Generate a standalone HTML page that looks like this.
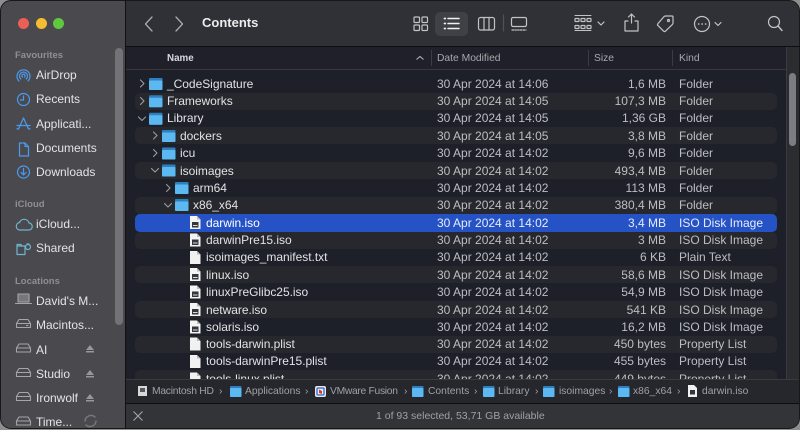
<!DOCTYPE html>
<html><head><meta charset="utf-8">
<style>
html,body{margin:0;padding:0;width:800px;height:430px;overflow:hidden;background:#8e8e8e}
*{box-sizing:border-box}
body{font-family:"Liberation Sans",sans-serif;position:relative}
.abs,.t,.r,svg{position:absolute}
.t{white-space:nowrap;line-height:16px;height:16px}
#win{position:absolute;left:0;top:0;width:800px;height:429px;border-radius:11px;overflow:hidden;background:#1e2028;border:1px solid #18181a}
.side{font-size:12px;color:#e4e4e6}
.sh{font-size:9.5px;color:#8f8f93;font-weight:bold}
.n{font-size:12px;color:#e2e2e4;letter-spacing:-.03px}
.d,.k{font-size:12px;color:#bdbdc1}
.s{font-size:12px;color:#bdbdc1;text-align:right;width:80px;left:586px}
.stripe{left:135px;width:642px;height:17.4px;background:#27282d;border-radius:5px}
.h{font-size:10.3px;color:#a8a8ac}
.p{font-size:10.3px;color:#a0a0a4}
</style></head><body>
<div id="win"></div>
<!-- sidebar -->
<div class="abs" style="left:1px;top:1px;width:124px;height:427px;background:#4a4a4e;border-radius:10px 0 0 10px"></div>
<div class="abs" style="left:115px;top:48px;width:8px;height:277px;background:#737377;border-radius:4px"></div>
<div class="abs" style="left:125px;top:0;width:1px;height:429px;background:#111"></div>
<!-- toolbar -->
<div class="abs" style="left:126px;top:1px;width:673px;height:45px;background:#303136;border-radius:0 10px 0 0"></div>
<div class="abs" style="left:126px;top:46px;width:674px;height:1px;background:#0e0e10"></div>
<!-- header -->
<div class="abs" style="left:126px;top:47px;width:673px;height:23px;background:#1f2029"></div>
<div class="abs" style="left:126px;top:69px;width:660px;height:1px;background:#37383c"></div>
<div class="abs" style="left:431px;top:50px;width:1px;height:16px;background:#3c3d42"></div>
<div class="abs" style="left:588px;top:50px;width:1px;height:16px;background:#3c3d42"></div>
<div class="abs" style="left:672px;top:50px;width:1px;height:16px;background:#3c3d42"></div>
<!-- list bg -->
<div class="abs" style="left:126px;top:70px;width:660px;height:309px;background:#1d2029"></div>
<div class="abs" style="left:786px;top:47px;width:13px;height:332px;background:#2b2c30;border-left:1px solid #3a3b3f"></div>
<div class="abs" style="left:789px;top:73px;width:7px;height:73px;background:#7c7d82;border-radius:4px"></div>

<!-- traffic -->
<div class="abs" style="left:18px;top:18px;width:11px;height:11px;border-radius:50%;background:#ec5f57"></div>
<div class="abs" style="left:36px;top:18px;width:11px;height:11px;border-radius:50%;background:#f5bd2f"></div>
<div class="abs" style="left:53px;top:18px;width:11px;height:11px;border-radius:50%;background:#5fc83f"></div>

<!-- sidebar text -->
<div class="t sh" style="left:15px;top:48px">Favourites</div>
<div class="t side" style="left:36px;top:67px">AirDrop</div>
<div class="t side" style="left:36px;top:91px">Recents</div>
<div class="t side" style="left:36px;top:116px">Applicati...</div>
<div class="t side" style="left:36px;top:140px">Documents</div>
<div class="t side" style="left:36px;top:164px">Downloads</div>
<div class="t sh" style="left:15px;top:197px">iCloud</div>
<div class="t side" style="left:36px;top:216px">iCloud...</div>
<div class="t side" style="left:36px;top:240px">Shared</div>
<div class="t sh" style="left:15px;top:274px">Locations</div>
<div class="t side" style="left:36px;top:293px">David's M...</div>
<div class="t side" style="left:36px;top:317px">Macintos...</div>
<div class="t side" style="left:36px;top:342px">AI</div>
<div class="t side" style="left:36px;top:366px">Studio</div>
<div class="t side" style="left:36px;top:390px">Ironwolf</div>
<div class="t side" style="left:36px;top:414px">Time...</div>

<!-- sidebar icons -->
<svg style="left:0;top:0" width="125" height="429" fill="none" stroke-linecap="round" stroke-linejoin="round">
 <g stroke="#4a9bf0" stroke-width="1.2">
  <path d="M19 81a6.500 6.500 0 1 1 9 0M20.800 79a4 4 0 1 1 5.400 0M22.500 77a1.600 1.600 0 1 1 2 0"/>
  <circle cx="23.500" cy="99.500" r="6"/><path d="M23.500 96v4h-3"/>
  <path d="M23.500 118l-5 11M23.500 118l5 11M17 125.500h13M17 129l2-1M30 129l-2-1"/>
  <path d="M19.500 143h5.500l3.500 3.500V156h-9z"/><path d="M25 143v3.500h3.500"/>
  <circle cx="23.500" cy="172" r="6"/><path d="M23.500 168.500v6M21 172.500l2.500 2.500 2.500-2.500"/>
 </g>
 <g stroke="#6fb3cf" stroke-width="1.200">
  <path d="M19.500 230h9a3.500 3.500 0 0 0 .5-7 5 5 0 0 0-9.500-.5 3.800 3.800 0 0 0 0 7.500z"/>
  <path d="M17 246h8v8.500H17zM17 246v-1.500h4l1 1.500M27 244h2"/><circle cx="28" cy="247" r="2.500"/>
 </g>
 <g stroke="#a6a6aa" stroke-width="1.100">
  <path d="M18 294h11v8H18z" fill="#77777a"/><path d="M15.500 303.500h16"/>
  <path d="M19 319.500h9l2.500 4v4h-14v-4zM16.500 323.500h14M26.500 325.500h1.500"/>
  <path d="M19 344h9l2.500 4v4h-14v-4zM16.500 348h14"/>
  <path d="M19 368.500h9l2.500 4v4h-14v-4zM16.500 372.500h14"/>
  <path d="M19 392.500h9l2.500 4v4h-14v-4zM16.500 396.500h14"/>
  <path d="M19 417h9l2.500 4v4h-14v-4zM16.500 421h14"/>
 </g>
 <g fill="#97979b">
  <path d="M90 345l-4 5h8zM86 351h8v1.500h-8z"/>
  <path d="M90 370l-4 5h8zM86 376h8v1.500h-8z"/>
  <path d="M90 394l-4 5h8zM86 400h8v1.500h-8z"/>
 </g>
 <path d="M85 421a6 6 0 0 1 10-4M96 421a6 6 0 0 1-10 4" stroke="#77777b" stroke-width="1.500"/>
</svg>

<!-- toolbar icons -->
<div class="abs" style="left:435px;top:12px;width:33px;height:24px;background:#404146;border-radius:5px"></div>
<svg style="left:126px;top:0" width="674" height="46" fill="none" stroke="#c3c3c6" stroke-width="1.200" stroke-linecap="round" stroke-linejoin="round">
 <path d="M26 17l-6.500 7 6.500 7M50 17l6.500 7-6.500 7" stroke-width="1.300" stroke="#a8a8ac"/>
 <rect x="288" y="17" width="5.500" height="5.500" rx="1"/><rect x="296" y="17" width="5.500" height="5.500" rx="1"/><rect x="288" y="25" width="5.500" height="5.500" rx="1"/><rect x="296" y="25" width="5.500" height="5.500" rx="1"/>
 <path d="M322 18.500h11M322 23.500h11M322 28.500h11" stroke="#f0f0f2" stroke-width="1.500"/>
 <path d="M318.500 18.500h.8M318.500 23.500h.8M318.500 28.500h.8" stroke="#f0f0f2" stroke-width="1.800"/>
 <rect x="352.500" y="17.500" width="16" height="12.500" rx="2"/><path d="M358 17.500v12.500M363 17.500v12.500"/>
 <path d="M377.500 15v16" stroke="#505156"/>
 <rect x="385.500" y="17.500" width="15" height="9" rx="1.500"/><path d="M386 30h14" stroke-dasharray="1.500 1.300"/>
 <path d="M449 15.500h16M449 30.500h16" stroke-width="1"/>
 <rect x="449" y="18.500" width="4" height="3" rx=".5"/><rect x="455" y="18.500" width="4" height="3" rx=".5"/><rect x="461" y="18.500" width="4" height="3" rx=".5"/>
 <rect x="449" y="25.500" width="4" height="3" rx=".5"/><rect x="455" y="25.500" width="4" height="3" rx=".5"/><rect x="461" y="25.500" width="4" height="3" rx=".5"/>
 <path d="M472 22l3 3 3-3M589 22.500l3 3 3-3"/>
 <path d="M505.500 23v-9M502.500 17l3-3 3 3M502 21h-3v10h13V21h-3"/>
 <path d="M546 16h-6.500a2 2 0 0 0-1.500.6L532 23.500a1.500 1.500 0 0 0 0 2.100l5.500 5.500a1.500 1.500 0 0 0 2.100 0l6.700-6.500a2 2 0 0 0 .7-1.500V17a1 1 0 0 0-1-1z"/>
 <circle cx="542.500" cy="20.500" r="1"/>
 <circle cx="576" cy="24" r="7.500"/><path d="M572.500 24h.3M576 24h.3M579.500 24h.3" stroke-width="1.500"/>
 <circle cx="648" cy="22" r="5.500"/><path d="M652 26l4 4.500" stroke-width="1.400"/>
</svg>
<div class="t" style="left:202px;top:15px;font-size:13px;font-weight:bold;color:#ececee">Contents</div>

<!-- header text -->
<div class="t h" style="left:167px;top:50.500px;font-weight:bold;color:#d8d8dc;font-size:9.800px">Name</div>
<svg style="left:415px;top:54px" width="10" height="8" fill="none" stroke="#b0b0b4" stroke-width="1.100"><path d="M1.500 5.500L5 2.500l3.500 3"/></svg>
<div class="t h" style="left:437px;top:50.500px">Date Modified</div>
<div class="t h" style="left:594px;top:50.500px">Size</div>
<div class="t h" style="left:679px;top:50.500px">Kind</div>

<!-- stripes -->
<div class="abs stripe" style="top:92.500px"></div>
<div class="abs stripe" style="top:127px"></div>
<div class="abs stripe" style="top:162px"></div>
<div class="abs stripe" style="top:196.500px"></div>
<div class="abs stripe" style="top:231.500px"></div>
<div class="abs stripe" style="top:266px"></div>
<div class="abs stripe" style="top:300.500px"></div>
<div class="abs stripe" style="top:335.500px"></div>
<div class="abs stripe" style="top:370px;height:9px;border-radius:5px 5px 0 0"></div>
<div class="abs" style="left:135px;top:214px;width:642px;height:17.500px;background:#2553c6;border-radius:5px"></div>

<svg style="left:126px;top:70px" width="660" height="309">
 <defs>
  <g id="f"><rect x="0" y="0" width="13.500" height="12" rx="1" fill="#2e7fbe"/><rect x="0" y="2.500" width="13.500" height="9.500" rx="1" fill="#5cb8f0"/></g>
  <g id="i"><path d="M0 0h7l3.500 3.500V13H0z" fill="#f4f4f4"/><path d="M7 0v3.500h3.500z" fill="#bbb"/><rect x="2" y="6" width="6.500" height="5.500" fill="#33363d"/><rect x="3" y="9" width="4.500" height="1" fill="#ddd"/></g>
  <g id="d"><path d="M0 0h7l3.500 3.500V13H0z" fill="#f1f1f1"/><path d="M7 0v3.500h3.500z" fill="#bbb"/></g>
 </defs>
 <g fill="none" stroke="#9c9ca0" stroke-width="1.100" stroke-linecap="round" stroke-linejoin="round">
  <path d="M14.500 10l3.500 3.500-3.500 3.500M14.500 27.500l3.500 3.500-3.500 3.500"/>
  <path d="M12.500 47l3.500 3.500 3.500-3.500"/>
  <path d="M27.500 62l3.500 3.500-3.500 3.500M27.500 79.500l3.500 3.500-3.500 3.500"/>
  <path d="M25.500 98.500l3.500 3.500 3.500-3.500"/>
  <path d="M40.500 114.500l3.500 3.500-3.500 3.500"/>
  <path d="M38.500 133.500l3.500 3.500 3.500-3.500"/>
 </g>
 <use href="#f" x="23" y="8"/><use href="#f" x="23" y="25.300"/><use href="#f" x="23" y="42.700"/>
 <use href="#f" x="36" y="60"/><use href="#f" x="36" y="77.500"/><use href="#f" x="36" y="94.500"/>
 <use href="#f" x="49" y="112"/><use href="#f" x="49" y="129"/>
 <use href="#i" x="64" y="146"/><use href="#i" x="64" y="163.500"/><use href="#d" x="64" y="181"/>
 <use href="#i" x="64" y="198"/><use href="#i" x="64" y="215.500"/><use href="#i" x="64" y="233"/><use href="#i" x="64" y="250.500"/>
 <use href="#d" x="64" y="267.500"/><use href="#d" x="64" y="285"/><use href="#d" x="64" y="302.500"/>
</svg>

<!-- rows -->
<div class="t n" style="left:167px;top:76px">_CodeSignature</div><div class="t d" style="left:437px;top:76px">30 Apr 2024 at 14:06</div><div class="t s" style="top:76px">1,6 MB</div><div class="t k" style="left:679px;top:76px">Folder</div>
<div class="t n" style="left:167px;top:93px">Frameworks</div><div class="t d" style="left:437px;top:93px">30 Apr 2024 at 14:05</div><div class="t s" style="top:93px">107,3 MB</div><div class="t k" style="left:679px;top:93px">Folder</div>
<div class="t n" style="left:167px;top:110px">Library</div><div class="t d" style="left:437px;top:110px">30 Apr 2024 at 14:05</div><div class="t s" style="top:110px">1,36 GB</div><div class="t k" style="left:679px;top:110px">Folder</div>
<div class="t n" style="left:180px;top:128px">dockers</div><div class="t d" style="left:437px;top:128px">30 Apr 2024 at 14:05</div><div class="t s" style="top:128px">3,8 MB</div><div class="t k" style="left:679px;top:128px">Folder</div>
<div class="t n" style="left:180px;top:145px">icu</div><div class="t d" style="left:437px;top:145px">30 Apr 2024 at 14:02</div><div class="t s" style="top:145px">9,6 MB</div><div class="t k" style="left:679px;top:145px">Folder</div>
<div class="t n" style="left:180px;top:162.500px">isoimages</div><div class="t d" style="left:437px;top:162.500px">30 Apr 2024 at 14:02</div><div class="t s" style="top:162.500px">493,4 MB</div><div class="t k" style="left:679px;top:162.500px">Folder</div>
<div class="t n" style="left:193px;top:180px">arm64</div><div class="t d" style="left:437px;top:180px">30 Apr 2024 at 14:02</div><div class="t s" style="top:180px">113 MB</div><div class="t k" style="left:679px;top:180px">Folder</div>
<div class="t n" style="left:193px;top:197px">x86_x64</div><div class="t d" style="left:437px;top:197px">30 Apr 2024 at 14:02</div><div class="t s" style="top:197px">380,4 MB</div><div class="t k" style="left:679px;top:197px">Folder</div>
<div class="t n" style="left:206px;top:215px;color:#fff">darwin.iso</div><div class="t d" style="left:437px;top:215px;color:#e8ecf8">30 Apr 2024 at 14:02</div><div class="t s" style="top:215px;color:#e8ecf8">3,4 MB</div><div class="t k" style="left:679px;top:215px;color:#e8ecf8">ISO Disk Image</div>
<div class="t n" style="left:206px;top:232px">darwinPre15.iso</div><div class="t d" style="left:437px;top:232px">30 Apr 2024 at 14:02</div><div class="t s" style="top:232px">3 MB</div><div class="t k" style="left:679px;top:232px">ISO Disk Image</div>
<div class="t n" style="left:206px;top:249px">isoimages_manifest.txt</div><div class="t d" style="left:437px;top:249px">30 Apr 2024 at 14:02</div><div class="t s" style="top:249px">6 KB</div><div class="t k" style="left:679px;top:249px">Plain Text</div>
<div class="t n" style="left:206px;top:267px">linux.iso</div><div class="t d" style="left:437px;top:267px">30 Apr 2024 at 14:02</div><div class="t s" style="top:267px">58,6 MB</div><div class="t k" style="left:679px;top:267px">ISO Disk Image</div>
<div class="t n" style="left:206px;top:284px">linuxPreGlibc25.iso</div><div class="t d" style="left:437px;top:284px">30 Apr 2024 at 14:02</div><div class="t s" style="top:284px">54,9 MB</div><div class="t k" style="left:679px;top:284px">ISO Disk Image</div>
<div class="t n" style="left:206px;top:301.500px">netware.iso</div><div class="t d" style="left:437px;top:301.500px">30 Apr 2024 at 14:02</div><div class="t s" style="top:301.500px">541 KB</div><div class="t k" style="left:679px;top:301.500px">ISO Disk Image</div>
<div class="t n" style="left:206px;top:319px">solaris.iso</div><div class="t d" style="left:437px;top:319px">30 Apr 2024 at 14:02</div><div class="t s" style="top:319px">16,2 MB</div><div class="t k" style="left:679px;top:319px">ISO Disk Image</div>
<div class="t n" style="left:206px;top:336px">tools-darwin.plist</div><div class="t d" style="left:437px;top:336px">30 Apr 2024 at 14:02</div><div class="t s" style="top:336px">450 bytes</div><div class="t k" style="left:679px;top:336px">Property List</div>
<div class="t n" style="left:206px;top:353px">tools-darwinPre15.plist</div><div class="t d" style="left:437px;top:353px">30 Apr 2024 at 14:02</div><div class="t s" style="top:353px">455 bytes</div><div class="t k" style="left:679px;top:353px">Property List</div>
<div class="t n" style="left:206px;top:371px">tools-linux.plist</div><div class="t d" style="left:437px;top:371px">30 Apr 2024 at 14:02</div><div class="t s" style="top:371px">449 bytes</div><div class="t k" style="left:679px;top:371px">Property List</div>

<!-- path bar -->
<div class="abs" style="left:126px;top:379px;width:673px;height:24px;background:#26272d;border-top:1px solid #3a3b3f"></div>
<div class="abs" style="left:126px;top:403px;width:673px;height:1px;background:#0e0e10"></div>
<div class="abs" style="left:126px;top:404px;width:673px;height:24px;background:#333438;border-radius:0 0 10px 0"></div>
<svg style="left:126px;top:379px" width="674" height="24" stroke="none">
 <defs><g id="pf"><rect width="11.500" height="11" rx="1" fill="#2e7fbe"/><rect y="2" width="11.500" height="9" rx="1" fill="#5cb8f0"/></g></defs>
 <rect x="12" y="7" width="9" height="10" fill="#d8d8d8"/><rect x="14" y="9" width="5" height="4" fill="#55585e"/>
 <use href="#pf" x="104" y="7"/>
 <use href="#pf" x="286" y="7"/><use href="#pf" x="357" y="7"/><use href="#pf" x="417" y="7"/><use href="#pf" x="492" y="7"/>
 <rect x="189" y="7" width="11" height="11" rx="2" fill="#e9e9ee"/><rect x="191" y="9" width="7" height="7" rx="1" fill="none" stroke="#2c63c8" stroke-width="1.300"/><path d="M193 10.500l3 1.500v3l-3-1z" fill="#d43a2f"/>
 <path d="M562 6h6l3 3v9h-9z" fill="#f1f1f1"/><rect x="564" y="11" width="5" height="4.500" fill="#33363d"/>
</svg>
<div class="t p" style="left:152px;top:384px;letter-spacing:-.25px">Macintosh HD</div><div class="t p" style="left:219px;top:384px">›</div>
<div class="t p" style="left:245px;top:384px">Applications</div><div class="t p" style="left:305px;top:384px">›</div>
<div class="t p" style="left:330px;top:384px;letter-spacing:-.3px">VMware Fusion</div><div class="t p" style="left:404px;top:384px">›</div>
<div class="t p" style="left:428px;top:384px">Contents</div><div class="t p" style="left:474px;top:384px">›</div>
<div class="t p" style="left:498px;top:384px">Library</div><div class="t p" style="left:535px;top:384px">›</div>
<div class="t p" style="left:559px;top:384px">isoimages</div><div class="t p" style="left:609px;top:384px">›</div>
<div class="t p" style="left:633px;top:384px">x86_x64</div><div class="t p" style="left:677px;top:384px">›</div>
<div class="t p" style="left:702px;top:384px">darwin.iso</div>
<svg style="left:132px;top:410px" width="12" height="12" fill="none" stroke="#a5a5a9" stroke-width="1.100"><path d="M1.500 1.500l9 9M10.500 1.500l-9 9"/></svg>
<div class="t" style="left:376px;top:408px;font-size:10.500px;color:#a0a0a4">1 of 93 selected, 53,71 GB available</div>
</body></html>
